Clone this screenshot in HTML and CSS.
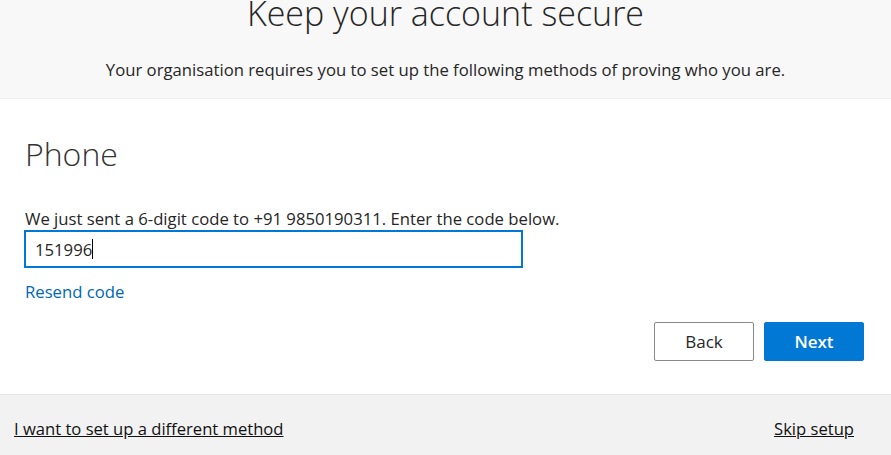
FILE: index.html
```html
<!DOCTYPE html>
<html lang="en">
<head>
<meta charset="utf-8">
<title>Keep your account secure</title>
<link rel="stylesheet" href="styles.css">
</head>
<body>
<header class="top">
  <h1 class="title">Keep your account secure</h1>
  <p class="subtitle">Your organisation requires you to set up the following methods of proving who you are.</p>
</header>
<main class="panel">
  <h2 class="method">Phone</h2>
  <p class="info">We just sent a 6-digit code to +91 9850190311. Enter the code below.</p>
  <div class="field"><span class="value">151996</span><span class="caret"></span></div>
  <a class="resend" href="#">Resend code</a>
  <div class="actions">
    <button class="btn btn-back">Back</button>
    <button class="btn btn-next">Next</button>
  </div>
</main>
<footer class="bottom">
  <a class="foot-link" href="#">I want to set up a different method</a>
  <a class="foot-link" href="#">Skip setup</a>
</footer>
</body>
</html>
```
FILE: styles.css
```css
* { box-sizing: border-box; }
html, body { margin: 0; padding: 0; }
body {
  width: 891px;
  height: 455px;
  overflow: hidden;
  font-family: "Open Sans", "Noto Sans", sans-serif;
  color: #262626;
  background: #fff;
}
.top {
  height: 99px;
  background: #f8f8f8;
  border-bottom: 1px solid #efefef;
  text-align: center;
  overflow: hidden;
}
.title {
  margin: -9px 0 0;
  font-size: 34px;
  font-weight: 300;
  line-height: 44px;
  color: #262626;
}
.subtitle {
  margin: 24px 0 0;
  font-size: 16.7px;
  line-height: 22px;
  color: #262626;
}
.panel {
  height: 295px;
  padding: 30px 27px 0 25px;
  display: flex;
  flex-direction: column;
  align-items: flex-start;
}
.method {
  margin: 0;
  font-size: 32px;
  font-weight: 300;
  line-height: 50px;
  color: #333;
}
.info {
  margin: 29px 0 0;
  font-size: 16.7px;
  line-height: 22px;
}
.field {
  width: 499px;
  height: 38px;
  margin-left: -1px;
  border: 2px solid #0078d4;
  padding: 0 9px;
  display: flex;
  align-items: center;
  font-size: 16.7px;
}
.caret {
  width: 1px;
  height: 20px;
  background: #000;
}
.resend {
  margin-top: 13px;
  font-size: 16.7px;
  line-height: 22px;
  color: #0067b8;
  text-decoration: none;
}
.actions {
  align-self: flex-end;
  display: flex;
  gap: 10px;
  margin-top: 19px;
}
.btn {
  width: 100px;
  height: 39px;
  font-family: inherit;
  font-size: 17px;
  border-radius: 2px;
}
.btn-back {
  background: #fff;
  border: 1px solid #8a8a8a;
  color: #262626;
}
.btn-next {
  background: #0078d4;
  border: 1px solid #0078d4;
  color: #fff;
  font-weight: 600;
}
.bottom {
  height: 61px;
  background: #f2f2f2;
  border-top: 1px solid #e6e6e6;
  display: flex;
  justify-content: space-between;
  align-items: center;
  padding: 6px 37px 0 14px;
}
.foot-link {
  font-size: 16.6px;
  color: #111;
  text-decoration: underline;
}
```
